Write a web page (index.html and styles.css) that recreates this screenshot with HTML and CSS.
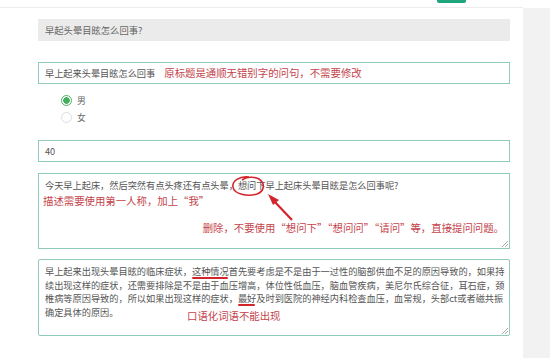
FILE: index.html
```html
<!DOCTYPE html>
<html>
<head>
    <meta charset="utf-8">
    <title>问题编辑</title>
    <link rel="stylesheet" href="styles.css">
</head>
<body>
<div class="page">
    <div class="main">
        <div class="topbar"><span class="topbtn"></span></div>
        <div class="form">
            <div class="title">早起头晕目眩怎么回事?</div>
            <div class="field one">早上起来头晕目眩怎么回事<span class="note inline">原标题是通顺无错别字的问句，不需要修改</span></div>
            <div class="radios">
                <label class="radio"><i class="dot on"></i>男</label>
                <label class="radio"><i class="dot"></i>女</label>
            </div>
            <div class="field age">40</div>
            <div class="area first">
                <p>今天早上起床，然后突然有点头疼还有点头晕，想问下早上起床头晕目眩是怎么回事呢?</p>
                <p class="note">描述需要使用第一人称，加上“我”</p>
                <p class="note right">删除，不要使用“想问下”“想问问”“请问”等，直接提问问题。</p>
                <svg class="mark" width="80" height="60" viewBox="0 0 80 60">
                    <path d="M24 3 C14 2 7 7 8 13 C9 20 22 23 32 20 C40 17 40 9 34 5 C29 2 21 3 17 6" fill="none" stroke="#d4252b" stroke-width="1.6"/>
                    <path d="M67 46 L48 26" stroke="#d4252b" stroke-width="2.2"/>
                    <path d="M43 20 L54 26 L48 31 Z" fill="#d4252b"/>
                </svg>
                <span class="grip"></span>
            </div>
            <div class="area second">
                <p>早上起来出现头晕目眩的临床症状，<span class="mk">这种情况</span>首先要考虑是不是由于一过性的脑部供血不足的原因导致的，如果持续出现这样的症状，还需要排除是不是由于血压增高，体位性低血压，脑血管疾病，美尼尔氏综合征，耳石症，颈椎病等原因导致的，所以如果出现这样的症状，<span class="mk">最好</span>及时到医院的神经内科检查血压，血常规，头部ct或者磁共振确定具体的原因。</p>
                <span class="note float">口语化词语不能出现</span>
                <span class="grip"></span>
            </div>
        </div>
    </div>
    <div class="side"></div>
</div>
</body>
</html>
```

FILE: styles.css
```css
body {
    margin: 0;
    background: #f2f2f2;
    font-family: "Noto Sans CJK SC", "Noto Sans", sans-serif;
    color: #555;
}
.page {
    display: flex;
    width: 550px;
    height: 358px;
    overflow: hidden;
}
.main {
    width: 523px;
    background: #fff;
}
.side {
    flex: 1;
    border-top: 8px solid #fff;
}
.topbar {
    height: 7px;
    border-bottom: 1px solid #ececec;
    padding-left: 437px;
}
.topbtn {
    display: block;
    width: 29px;
    height: 3px;
    background: #1fa57d;
    border-radius: 0 0 2px 2px;
}
.form {
    margin: 11px 0 0 38px;
    width: 472px;
}
.title {
    height: 22px;
    line-height: 22px;
    background: #ebebeb;
    padding-left: 7px;
    font-size: 9.3px;
    color: #666;
}
.field {
    margin-top: 21px;
    height: 20px;
    line-height: 20px;
    border: 1px solid #8fcabd;
    padding-left: 6px;
    font-size: 9.2px;
    color: #555;
}
.field.age {
    margin-top: 0;
}
.note {
    color: #c4434a;
    font-size: 10.4px;
}
.note.inline {
    margin-left: 9px;
}
.radios {
    display: flex;
    flex-direction: column;
    gap: 6px;
    padding: 11px 0 0 23px;
    height: 45px;
}
.radio {
    display: flex;
    align-items: center;
    gap: 5px;
    font-size: 8.8px;
    color: #666;
    height: 11px;
}
.dot {
    box-sizing: border-box;
    width: 11px;
    height: 11px;
    border-radius: 50%;
    border: 1px solid #ddd;
    background: #fff;
}
.dot.on {
    border-color: #4fb46a;
    background: radial-gradient(circle, #43ad5e 0 3px, #fff 3.5px);
}
.area {
    position: relative;
    margin-top: 11px;
    border: 1px solid #8fcabd;
    padding: 5px 2px 0 6px;
    font-size: 9.2px;
    line-height: 13.6px;
}
.area.first {
    height: 69px;
}
.area.second {
    margin-top: 10px;
    height: 70px;
    border-radius: 2px;
}
.area p {
    margin: 0;
}
.area .note {
    line-height: 16px;
}
.first .note {
    margin-left: -2px;
}
.first .note.right {
    text-align: right;
    margin: 11px 3px 0 0;
}
.mk {
    position: relative;
}
.mk::after {
    content: "";
    position: absolute;
    left: 0;
    right: 1px;
    bottom: -1px;
    height: 2px;
    border-radius: 1px;
    background: #d4252b;
    z-index: 1;
}
.float {
    position: absolute;
    left: 148px;
    top: 48px;
}
.mark {
    position: absolute;
    left: 186px;
    top: 0;
}
.grip {
    position: absolute;
    right: 1px;
    bottom: 1px;
    width: 6px;
    height: 6px;
    background: linear-gradient(135deg, transparent 45%, #aaa 45% 52%, transparent 52% 70%, #aaa 70% 77%, transparent 77%);
}
```
